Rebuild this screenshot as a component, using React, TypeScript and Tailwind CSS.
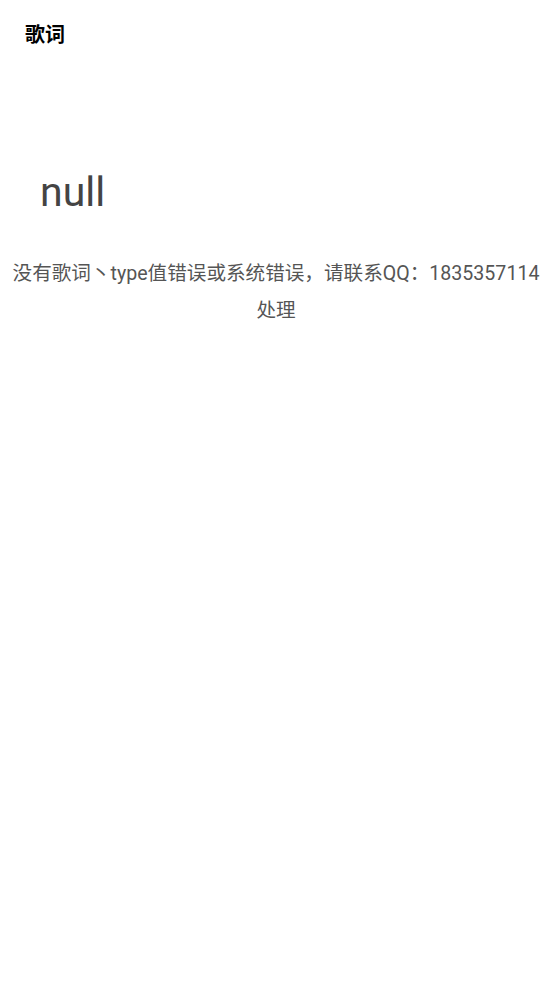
export default function App() {
  return (
    <div className="min-h-screen bg-white font-['Roboto','Noto_Sans_CJK_SC',sans-serif]">
      {/* header */}
      <div className="h-[69px] flex items-center pl-[25px]">
        <h1 className="text-[20px] font-bold text-black">歌词</h1>
      </div>

      <div className="pt-[98px] pl-[40px]">
        <p className="text-[41px] leading-[50px] text-[#444]">null</p>
      </div>

      <p className="mt-[38px] px-[8px] text-center text-[19.6px] leading-[37px] text-[#555]">
        没有歌词丶type值错误或系统错误，请联系QQ：1835357114处理
      </p>
    </div>
  )
}
